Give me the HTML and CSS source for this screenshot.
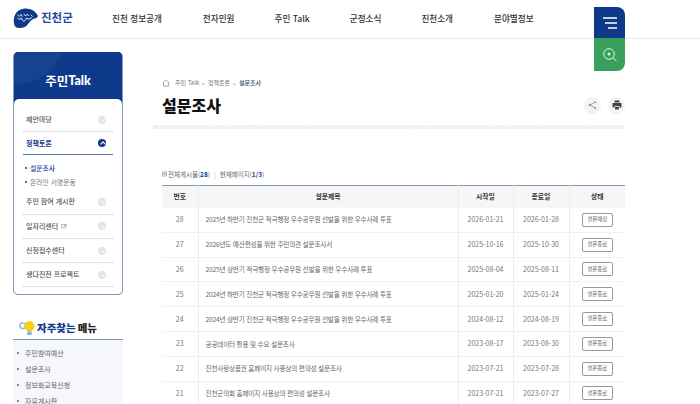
FILE: index.html
```html
<!DOCTYPE html>
<html lang="ko">
<head>
<meta charset="utf-8">
<title>설문조사 - 진천군</title>
<link rel="stylesheet" href="styles.css">
</head>
<body>
<header class="top">
  <a class="logo">
    <svg class="logo-mark" viewBox="0 0 28 20" width="25" height="20" preserveAspectRatio="none">
      <path d="M1 15C0 7 5 1 13 .5c6-.4 12 2.5 14.500 6.500 1 2-1 3.500-3 3.500-4 .5-6 4-9 7-4 3-10 3-12.500 1.500C2 18 1.300 17 1 15z" fill="#0f3a8c"/>
      <path d="M5 6.500l2 2 2-2 1.500 2M12 6l2 2 2-2 2 2M20 7l2 1.500" fill="none" stroke="#fff" stroke-width=".9"/>
      <path d="M5 10c2 1.500 3 1.500 4.500 0 1 4 4 4 5.500 0 2 1.500 3.500 1.500 6-.5" fill="none" stroke="#fff" stroke-width="1"/>
    </svg>
    <span class="logo-text">진천군</span>
  </a>
  <nav class="gnb">
    <a class="n1">진천 정보공개</a>
    <a class="n2">전자민원</a>
    <a class="n3">주민 Talk</a>
    <a class="n4">군정소식</a>
    <a class="n5">진천소개</a>
    <a class="n6">분야별정보</a>
  </nav>
  <div class="tools">
    <button class="tool tool-menu" aria-label="메뉴">
      <svg viewBox="0 0 16 14" width="16" height="14"><path d="M1 2h14M3 7h12M6 12h9" stroke="#fff" stroke-width="1.300" fill="none"/></svg>
    </button>
    <button class="tool tool-search" aria-label="검색">
      <svg viewBox="0 0 16 16" width="16" height="16"><circle cx="7" cy="7" r="5.300" stroke="#e6f3e8" stroke-width="1" fill="none"/><circle cx="7" cy="7" r="1.500" fill="#e6f3e8"/><path d="M11 11l3.500 3" stroke="#e6f3e8" stroke-width="1"/></svg>
    </button>
  </div>
</header>

<div class="layout">
  <aside class="side">
    <section class="side-box">
      <h2 class="side-title">주민<span class="side-title-en">Talk</span></h2>
      <ul class="side-menu">
        <li class="side-item"><span>제안마당</span><i class="chev"></i></li>
        <li class="side-item active"><span>정책토론</span><i class="chev up"></i></li>
        <li class="side-sub">
          <a class="cur">설문조사</a>
          <a>온라인 서명운동</a>
        </li>
        <li class="side-item"><span>주민 참여 게시판</span><i class="chev"></i></li>
        <li class="side-item"><span>일자리센터 <svg class="ext" viewBox="0 0 8 6" width="6" height="5"><path d="M.5.500h5v4h-5zM4 .5l3 0v3" fill="none" stroke="#777" stroke-width=".7"/></svg></span><i class="chev"></i></li>
        <li class="side-item"><span>신청접수센터</span><i class="chev"></i></li>
        <li class="side-item"><span>생다진천 프로젝트</span><i class="chev"></i></li>
      </ul>
    </section>
    <section class="fav">
      <h3 class="fav-title">
        <svg viewBox="0 0 18 18" width="17" height="17"><circle cx="4" cy="6" r="3" fill="none" stroke="#8fb2e6" stroke-width="1.500"/><circle cx="11" cy="6.500" r="5.500" fill="#f9cf16"/><rect x="8.500" y="12" width="5" height="4" rx="1" fill="#8fb2e6"/></svg>
        <span class="fav-a">자주찾는</span> <span class="fav-b">메뉴</span>
      </h3>
      <ul class="fav-list">
        <li>주민참여예산</li>
        <li>설문조사</li>
        <li>정보화교육신청</li>
        <li>자유게시판</li>
      </ul>
    </section>
  </aside>

  <main class="content">
    <div class="crumb">
      <svg class="home" viewBox="0 0 10 10" width="8" height="8"><path d="M.8 5L5 1l4.200 4M2 4.500V9h6V4.500" fill="none" stroke="#777" stroke-width=".8"/></svg>
      <span class="crumb-t">주민 Talk</span><span class="gt">&gt;</span><span class="crumb-t">정책토론</span><span class="gt">&gt;</span><b class="crumb-cur">설문조사</b>
    </div>
    <div class="title-row">
      <h1 class="page-title">설문조사</h1>
      <div class="actions">
        <span class="round">
          <svg viewBox="0 0 10 10" width="9" height="10"><circle cx="8" cy="1.800" r="1.100" fill="#888"/><circle cx="2" cy="5" r="1.100" fill="#888"/><circle cx="8" cy="8.200" r="1.100" fill="#888"/><path d="M8 1.800L2 5l6 3.200" fill="none" stroke="#888" stroke-width=".8"/></svg>
        </span>
        <span class="round">
          <svg viewBox="0 0 10 10" width="10" height="10"><path d="M2.500.5h5v2h-5z" fill="#444"/><path d="M.5 3h9v4.500h-2V6h-5v1.500h-2z" fill="#444"/><path d="M3 6.800h4v2.700H3z" fill="#444"/></svg>
        </span>
      </div>
    </div>
    <div class="dots"></div>
    <p class="count">
      <svg viewBox="0 0 6 6" width="5" height="6"><path d="M.5.500h5v5h-5zM.5 2h5M.5 3.500h5" fill="none" stroke="#777" stroke-width=".6"/></svg>
      <span>전체게시물(<b>28</b>)<i class="sep">|</i>현재페이지(<b>1/3</b>)</span>
    </p>
    <table class="board">
      <colgroup><col class="c1"><col class="c2"><col class="c3"><col class="c4"><col class="c5"></colgroup>
      <thead><tr><th>번호</th><th>설문제목</th><th>시작일</th><th>종료일</th><th>상태</th></tr></thead>
      <tbody>
        <tr><td>28</td><td class="tl">2025년 하반기 진천군 적극행정 우수공무원 선발을 위한 우수사례 투표</td><td>2026-01-21</td><td>2026-01-28</td><td><span class="tag">설문예정</span></td></tr>
        <tr><td>27</td><td class="tl">2026년도 예산편성을 위한 주민의견 설문조사서</td><td>2025-10-16</td><td>2025-10-30</td><td><span class="tag">설문종료</span></td></tr>
        <tr><td>26</td><td class="tl">2025년 상반기 적극행정 우수공무원 선발을 위한 우수사례 투표</td><td>2025-08-04</td><td>2025-08-11</td><td><span class="tag">설문종료</span></td></tr>
        <tr><td>25</td><td class="tl">2024년 하반기 진천군 적극행정 우수공무원 선발을 위한 우수사례 투표</td><td>2025-01-20</td><td>2025-01-24</td><td><span class="tag">설문종료</span></td></tr>
        <tr><td>24</td><td class="tl">2024년 상반기 진천군 적극행정 우수공무원 선발을 위한 우수사례 투표</td><td>2024-08-12</td><td>2024-08-19</td><td><span class="tag">설문종료</span></td></tr>
        <tr><td>23</td><td class="tl">공공데이터 활용 및 수요 설문조사</td><td>2023-08-17</td><td>2023-08-30</td><td><span class="tag">설문종료</span></td></tr>
        <tr><td>22</td><td class="tl">진천사랑상품권 홈페이지 사용상의 편의성 설문조사</td><td>2023-07-21</td><td>2023-07-28</td><td><span class="tag">설문종료</span></td></tr>
        <tr><td>21</td><td class="tl">진천군의회 홈페이지 사용상의 편의성 설문조사</td><td>2023-07-21</td><td>2023-07-27</td><td><span class="tag">설문종료</span></td></tr>
      </tbody>
    </table>
  </main>
</div>
</body>
</html>
```

FILE: styles.css
```css
* { box-sizing: border-box; }
html, body { margin: 0; height: 404px; overflow: hidden; background: #fff; }
body { font-family: "Noto Sans CJK KR", "Noto Sans", sans-serif; color: #555; font-size: 7px; }
h1, h2, h3, p, ul { margin: 0; padding: 0; }
ul { list-style: none; }

.top { position: relative; height: 39px; border-bottom: 1px solid #e9e9e9; display: flex; align-items: center; padding: 0 0 2px 13px; }
.logo { display: flex; align-items: center; gap: 3px; width: 99px; }
.logo-text { font-size: 11.500px; font-weight: 700; color: #1f4aa0; line-height: 1; }
.gnb { display: flex; font-size: 8.600px; font-weight: 500; color: #333; line-height: 1; }
.gnb a { white-space: nowrap; }
.n1, .n5 { margin-right: 41px; }
.n2, .n3, .n4 { margin-right: 40px; }
.tools { position: absolute; left: 594px; top: 7px; width: 31px; display: flex; flex-direction: column; }
.tool { display: flex; align-items: center; justify-content: center; width: 31px; border: 0; padding: 0; }
.tool-menu { background: #0f3a8c; border-top-right-radius: 8px; height: 31px; }
.tool-search { background: #38a05a; border-bottom-right-radius: 8px; height: 33px; }

.layout { display: flex; padding: 13px 0 0 13px; }
.side { width: 110px; flex: none; }
.side-box { background: #0f3a8c; border-radius: 5px; border: 1px solid #7f9cbc; border-top: 0; height: 243px; overflow: hidden; }
.side-title { height: 47px; display: flex; align-items: center; justify-content: center; padding-top: 10px; font-size: 12.500px; font-weight: 700; color: #fff; background: radial-gradient(circle at 0 -20px, #174290 0 52px, #0f3a8c 53px); }
.side-title-en { font-family: "Lato", sans-serif; font-weight: 900; font-size: 12.500px; }
.side-menu { background: #fff; height: 196px; border-radius: 5px 5px 0 0; padding: 9px 9px 0 9px; }
.side-item { height: 24.300px; display: flex; align-items: center; justify-content: space-between; padding: 0 7px 0 3px; border-bottom: 1px dotted #c9c9c9; color: #555; font-size: 7px; font-weight: 500; line-height: 1; }
.side-item.active { color: #0f3a8c; font-weight: 700; border-bottom: 1px solid #5a7ba5; height: 23px; }
.chev { width: 8px; height: 8px; border-radius: 50%; background: #e3e3e3; position: relative; flex: none; }
.chev::after { content: ""; position: absolute; left: 2.500px; top: 1.500px; width: 3px; height: 3px; border-right: 1px solid #f4f4f4; border-bottom: 1px solid #f4f4f4; transform: rotate(45deg); }
.chev.up { background: #0f3a8c; }
.chev.up::after { top: 3px; border-color: #fff; transform: rotate(225deg); }
.ext { margin-left: 1px; vertical-align: -0.500px; }
.side-sub { display: flex; flex-direction: column; gap: 6px; padding: 9px 0 4px 0; font-size: 6.800px; line-height: 8px; color: #777; }
.side-sub a { display: flex; align-items: center; gap: 3px; }
.side-sub a::before { content: ""; width: 2px; height: 2px; border-radius: 50%; background: #0f3a8c; margin-left: 2px; }
.side-sub .cur { color: #0f3a8c; font-weight: 500; }

.fav { margin-top: 22px; }
.fav-title { height: 23px; border-bottom: 1px solid #7f9cbc; display: flex; align-items: center; padding: 0 0 0 6px; font-size: 10.500px; font-weight: 900; line-height: 1; white-space: nowrap; }
.fav-a { color: #0f3a8c; margin-left: 1px; }
.fav-b { color: #222; margin-left: 2px; }
.fav-list { background: #f5f7fb; padding: 5px 0 0 4px; }
.fav-list li { height: 16px; display: flex; align-items: center; gap: 6px; font-size: 7px; color: #666; }
.fav-list li::before { content: ""; width: 2px; height: 2px; background: #666; border-radius: 50%; }

.content { width: 472px; margin-left: 30px; padding-top: 26px; flex: none; }
.crumb { display: flex; align-items: center; height: 10px; padding-left: 9px; font-size: 6px; line-height: 1; color: #777; gap: 3px; }
.home { margin-right: 2px; }
.gt { font-size: 5px; }
.crumb-cur { color: #25476f; font-weight: 500; }
.title-row { display: flex; align-items: center; justify-content: space-between; height: 28px; margin-top: 3px; padding-left: 9px; }
.page-title { font-size: 16px; font-weight: 900; color: #111; line-height: 1; }
.actions { display: flex; gap: 7px; }
.round { width: 17px; height: 17px; border-radius: 50%; background: #f3f3f3; display: flex; align-items: center; justify-content: center; }
.dots { height: 4px; margin-top: 6px; background: repeating-linear-gradient(45deg, #ececec 0 1px, #f8f8f8 1px 2px); }

.count { margin: 40px 0 0 9px; height: 10px; display: flex; align-items: center; gap: 1px; font-size: 6.500px; line-height: 1; color: #666; white-space: nowrap; }
.count b { color: #0f3a8c; font-weight: 700; }
.sep { color: #bbb; margin: 0 4px; font-style: normal; }

.board { margin: 6px 0 0 9px; width: 463px; border-collapse: collapse; table-layout: fixed; border-top: 1px solid #7f9cbc; }
.c1 { width: 36px; }
.c2 { width: 260px; }
.c3 { width: 55px; }
.c4 { width: 56px; }
.c5 { width: 56px; }
th { height: 22px; background: #f6f6f6; font-size: 6.800px; font-weight: 700; color: #333; padding: 0; border-left: 1px solid #ececec; line-height: 1; }
td { height: 24.800px; padding: 0; text-align: center; font-size: 7px; color: #777; border-bottom: 1px solid #f0f0f0; border-left: 1px solid #ececec; line-height: 1; white-space: nowrap; }
th:first-child, td:first-child { border-left: 0; }
td.tl { text-align: left; padding-left: 7px; color: #666; font-size: 6.600px; letter-spacing: -.18px; }
.tag { display: inline-flex; align-items: center; justify-content: center; width: 31px; height: 14px; border: 1px solid #999; border-radius: 2px; font-size: 5.500px; color: #666; }
```
